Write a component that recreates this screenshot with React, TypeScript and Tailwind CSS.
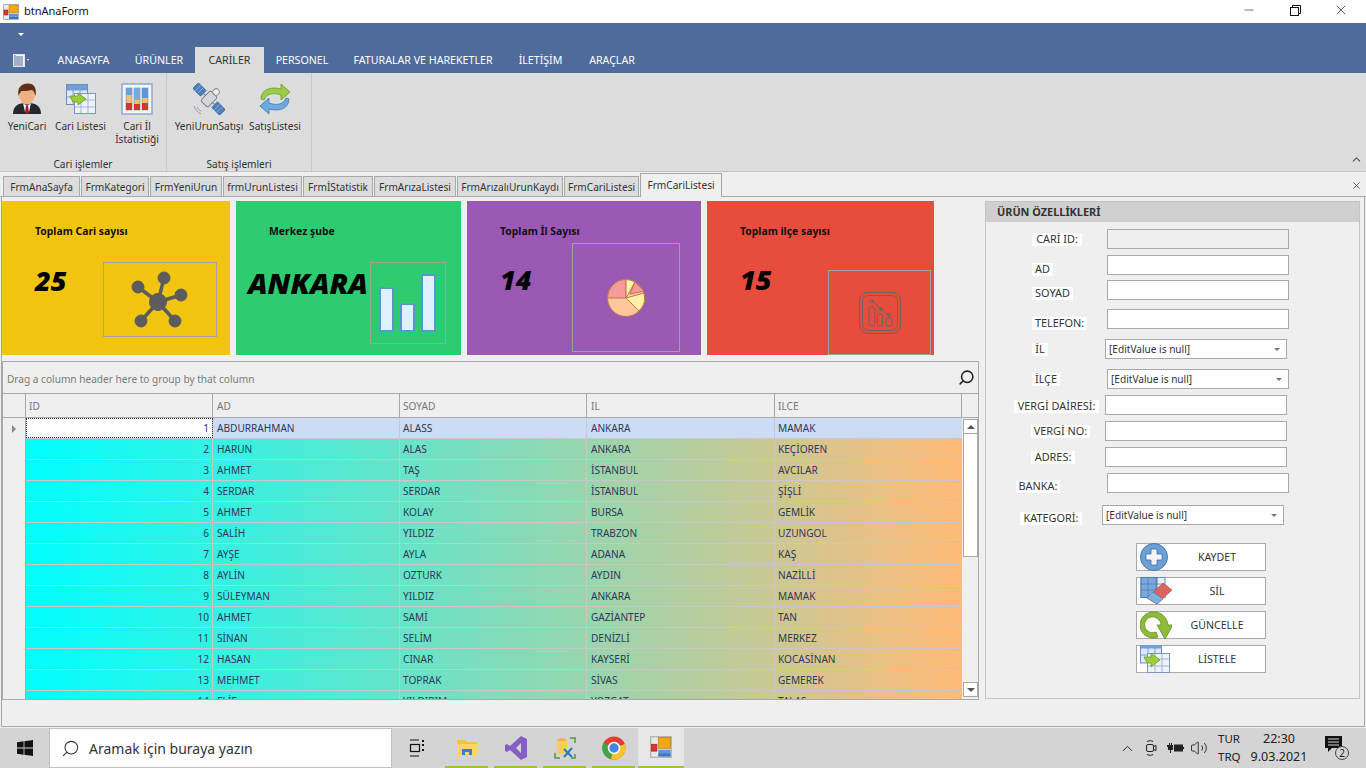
import type { ReactNode } from 'react';
import { Search, ChevronUp, Volume2, X, Minus } from 'lucide-react';

const rows = [
  ['1', 'ABDURRAHMAN', 'ALASS', 'ANKARA', 'MAMAK'],
  ['2', 'HARUN', 'ALAS', 'ANKARA', 'KEÇİOREN'],
  ['3', 'AHMET', 'TAŞ', 'İSTANBUL', 'AVCILAR'],
  ['4', 'SERDAR', 'SERDAR', 'İSTANBUL', 'ŞİŞLİ'],
  ['5', 'AHMET', 'KOLAY', 'BURSA', 'GEMLİK'],
  ['6', 'SALİH', 'YILDIZ', 'TRABZON', 'UZUNGOL'],
  ['7', 'AYŞE', 'AYLA', 'ADANA', 'KAŞ'],
  ['8', 'AYLİN', 'OZTURK', 'AYDIN', 'NAZİLLİ'],
  ['9', 'SÜLEYMAN', 'YILDIZ', 'ANKARA', 'MAMAK'],
  ['10', 'AHMET', 'SAMİ', 'GAZİANTEP', 'TAN'],
  ['11', 'SİNAN', 'SELİM', 'DENİZLİ', 'MERKEZ'],
  ['12', 'HASAN', 'CINAR', 'KAYSERİ', 'KOCASİNAN'],
  ['13', 'MEHMET', 'TOPRAK', 'SİVAS', 'GEMEREK'],
  ['14', 'ELİF', 'YILDIRIM', 'YOZGAT', 'TALAS'],
];

const ribbonTabs = [
  { label: 'ANASAYFA', cls: 'w-[79px]' },
  { label: 'ÜRÜNLER', cls: 'w-[72px]' },
  { label: 'CARİLER', cls: 'w-[69px] bg-[#dcdcdc] text-[#333]' },
  { label: 'PERSONEL', cls: 'w-[76px]' },
  { label: 'FATURALAR VE HAREKETLER', cls: 'w-[166px]' },
  { label: 'İLETİŞİM', cls: 'w-[69px]' },
  { label: 'ARAÇLAR', cls: 'w-[74px]' },
];

const docTabs = [
  { label: 'FrmAnaSayfa', cls: 'w-[77px]' },
  { label: 'FrmKategori', cls: 'w-[68px]' },
  { label: 'FrmYeniUrun', cls: 'w-[72px]' },
  { label: 'frmUrunListesi', cls: 'w-[79px]' },
  { label: 'FrmİStatistik', cls: 'w-[70px]' },
  { label: 'FrmArızaListesi', cls: 'w-[82px]' },
  { label: 'FrmArızalıUrunKaydı', cls: 'w-[106px]' },
  { label: 'FrmCariListesi', cls: 'w-[75px]' },
];

const formRows = [
  { label: 'CARİ ID:', row: 'mt-[7px]', col: 'w-[121px]', lab: 'ml-[46px] mt-[4px] w-[50px]', input: 'w-[182px] bg-[#efefef]' },
  { label: 'AD', row: 'mt-[6px]', col: 'w-[121px]', lab: 'ml-[46px] mt-[8px] w-[21px]', input: 'w-[182px] bg-white' },
  { label: 'SOYAD', row: 'mt-[5px]', col: 'w-[121px]', lab: 'ml-[46px] mt-[7px] w-[41px]', input: 'w-[182px] bg-white' },
  { label: 'TELEFON:', row: 'mt-[9px]', col: 'w-[121px]', lab: 'ml-[46px] mt-[8px] w-[55px]', input: 'w-[182px] bg-white' },
  { label: 'İL', row: 'mt-[10px]', col: 'w-[119px]', lab: 'ml-[46px] mt-[4px] w-[16px]', combo: true },
  { label: 'İLÇE', row: 'mt-[10px]', col: 'w-[121px]', lab: 'ml-[46px] mt-[4px] w-[28px]', combo: true },
  { label: 'VERGİ DAİRESİ:', row: 'mt-[6px]', col: 'w-[119px]', lab: 'ml-[28px] mt-[5px] w-[85px]', input: 'w-[182px] bg-white' },
  { label: 'VERGİ NO:', row: 'mt-[6px]', col: 'w-[119px]', lab: 'ml-[45px] mt-[4px] w-[59px]', input: 'w-[182px] bg-white' },
  { label: 'ADRES:', row: 'mt-[6px]', col: 'w-[119px]', lab: 'ml-[45px] mt-[4px] w-[44px]', input: 'w-[182px] bg-white' },
  { label: 'BANKA:', row: 'mt-[6px]', col: 'w-[121px]', lab: 'ml-[30px] mt-[7px] w-[44px]', input: 'w-[182px] bg-white' },
  { label: 'KATEGORİ:', row: 'mt-[12px]', col: 'w-[116px]', lab: 'ml-[34px] mt-[7px] w-[62px]', combo: true },
];

function PersonIcon() {
  return (
    <svg width="32" height="32" viewBox="0 0 32 32">
      <path d="M2 31c0-8 5-11 14-11s14 3 14 11z" fill="#26282e" />
      <path d="M12 20l4 3 4-3-2 9h-4z" fill="#f4f4f4" />
      <path d="M15 23h2l1 6-2 2-2-2z" fill="#a81c22" />
      <ellipse cx="16" cy="11.500" rx="8" ry="10" fill="#eeb184" />
      <path d="M7.500 13C6 4 11 0.500 17 0.500s9 4.500 7.500 12.500c-1-3-2-6-4-6-3 1-8 1-10 1-1 1-2.500 3-3 5z" fill="#5c2f16" />
    </svg>
  );
}

function GridArrowIcon() {
  return (
    <svg width="32" height="32" viewBox="0 0 32 32">
      <rect x="1.500" y="1.500" width="21" height="20" fill="#dfe8f5" stroke="#6f8fc2" />
      <rect x="2" y="2" width="20" height="5" fill="#6ca0d8" />
      <path d="M8 2v19M15 2v19M2 7h20M2 14h20" stroke="#7f9ccc" strokeWidth="1" />
      <rect x="9.500" y="10.500" width="21" height="20" fill="#eef2fa" stroke="#7e94c6" />
      <path d="M16 11v19M23 11v19M10 17h20M10 24h20" stroke="#a3b4d8" strokeWidth="1" />
      <path d="M5 13h8v-3l8 6-8 6v-3H8z" fill="#9ccb3c" stroke="#6c9a22" strokeWidth="0.800" />
    </svg>
  );
}

function BarsIcon() {
  return (
    <svg width="32" height="32" viewBox="0 0 32 32">
      <rect x="1" y="1" width="30" height="30" fill="#f3f6fb" stroke="#8ba3cc" strokeWidth="1.400" />
      <rect x="5" y="5" width="6" height="22" fill="#f0c070" stroke="#7d8ba8" strokeWidth="0.600" />
      <rect x="5" y="5" width="6" height="7" fill="#6ba2d6" />
      <rect x="5" y="20" width="6" height="7" fill="#c93d30" />
      <rect x="13" y="5" width="6" height="22" fill="#f0c070" stroke="#7d8ba8" strokeWidth="0.600" />
      <rect x="13" y="5" width="6" height="12" fill="#7aaadb" />
      <rect x="13" y="21" width="6" height="6" fill="#c93d30" />
      <rect x="21" y="5" width="6" height="22" fill="#f0c070" stroke="#7d8ba8" strokeWidth="0.600" />
      <rect x="21" y="5" width="6" height="10" fill="#5d98d2" />
      <rect x="21" y="20" width="6" height="7" fill="#c93d30" />
    </svg>
  );
}

function SatelliteIcon() {
  return (
    <svg width="32" height="32" viewBox="0 0 32 32">
      <g transform="rotate(45 16 16)">
        <rect x="-3" y="12" width="11" height="8" fill="#4d7fbe" stroke="#2f5e9c" strokeWidth="0.700" />
        <path d="M0.500 12v8M4 12v8" stroke="#9cc0e6" strokeWidth="0.700" />
        <rect x="24" y="12" width="11" height="8" fill="#4d7fbe" stroke="#2f5e9c" strokeWidth="0.700" />
        <path d="M27.500 12v8M31 12v8" stroke="#9cc0e6" strokeWidth="0.700" />
        <rect x="11" y="9" width="10" height="14" rx="2" fill="#d4d6da" stroke="#7a7f88" />
        <rect x="13" y="3" width="6" height="6" rx="2" fill="#eceef0" stroke="#8b8f96" />
        <path d="M8 16h3M21 16h3" stroke="#777" />
      </g>
      <path d="M1 23c1 3 3 6 7 8M4 24c1 2 2 3 4 4" fill="none" stroke="#8fa0b5" />
    </svg>
  );
}

function RefreshIcon() {
  return (
    <svg width="32" height="32" viewBox="0 0 32 32">
      <path d="M2 16C2 7 11 3 22 6V1l9 8-9 8v-5C14 9 7 11 5 17z" fill="#9bcc45" stroke="#6d9c26" strokeWidth="0.800" />
      <path d="M30 16c0 9-9 13-20 10v5l-9-8 9-8v5c8 3 15 1 17-5z" fill="#6fa8dc" stroke="#3f78b5" strokeWidth="0.800" />
    </svg>
  );
}

function PlusIcon() {
  return (
    <svg width="28" height="28" viewBox="0 0 28 28">
      <circle cx="14" cy="14" r="13.500" fill="#6da0d6" stroke="#4c78b0" />
      <path d="M11 6h6v5h5v6h-5v5h-6v-5H6v-6h5z" fill="#f3f7fc" stroke="#3f6ba8" strokeWidth="0.800" />
    </svg>
  );
}

function EraserIcon() {
  return (
    <svg width="32" height="28" viewBox="0 0 32 28">
      <rect x="1" y="0.500" width="24" height="20" fill="#e6edf7" stroke="#6c8cbd" />
      <rect x="1" y="0.500" width="16" height="20" fill="#7aa8db" stroke="#4f7ab0" />
      <path d="M1 7h24M1 13h24M8 1v19M16 1v19" stroke="#4f7ab0" strokeWidth="0.700" />
      <path d="M7 21L23 6l9 7-15 14z" fill="#d9655c" stroke="#a94a43" strokeWidth="0.600" />
      <path d="M7 21l6-6 10 7-6 5z" fill="#7eb0e0" stroke="#4f7ab0" strokeWidth="0.600" />
    </svg>
  );
}

function UpdateIcon() {
  return (
    <svg width="32" height="28" viewBox="0 0 32 28">
      <path d="M14 1a13 13 0 1 0 4 25l-2-5a8 8 0 1 1 3-12c1 1 2 3 2 5h-4l8 14 8-14h-5C27 6 21 1 14 1z" fill="#8fbb3a" stroke="#648a22" strokeWidth="0.800" />
    </svg>
  );
}

function ListIcon() {
  return (
    <svg width="30" height="28" viewBox="0 0 30 28">
      <rect x="0.500" y="-4" width="21" height="22" fill="#dfe8f5" stroke="#6f8fc2" />
      <rect x="1" y="-4" width="20" height="7" fill="#6ca0d8" />
      <path d="M8 -4v22M15 -4v22M1 3h20M1 10h20" stroke="#7f9ccc" />
      <rect x="7.500" y="8.500" width="22" height="19" fill="#eef2fa" stroke="#7e94c6" />
      <path d="M15 9v18M22 9v18M8 14h21M8 21h21" stroke="#a3b4d8" />
      <path d="M4 12h7V8l9 7-9 7v-4H7z" fill="#9ccb3c" stroke="#6c9a22" strokeWidth="0.700" />
    </svg>
  );
}

function AppLogo({ size = 16 }: { size?: number }) {
  return (
    <svg width={size} height={size} viewBox="0 0 16 16">
      <rect x="0.500" y="0.500" width="15" height="15" fill="#e8e8e8" stroke="#b5b5b5" />
      <rect x="6" y="1" width="9" height="8" fill="#f0a818" stroke="#b97f10" strokeWidth="0.500" />
      <rect x="1" y="6" width="4" height="5" fill="#d9362b" stroke="#9c231b" strokeWidth="0.500" />
      <rect x="6" y="10" width="9" height="2.500" fill="#5b95dd" />
      <rect x="6" y="12.500" width="9" height="2.500" fill="#3d74c4" />
    </svg>
  );
}

function ComboBox() {
  return (
    <div className="h-[20px] w-[182px] shrink-0 border border-[#a9a9a9] bg-white flex items-center pl-[3px] pr-[6px]">
      <span className="flex-1 pt-[1px] text-[#333]">[EditValue is null]</span>
      <span className="w-0 h-0 border-x-[3px] border-x-transparent border-t-[3px] border-t-[#777]" />
    </div>
  );
}

function StatCard({ cls, title, value, valueCls, boxCls, children }: {
  cls: string; title: string; value: string; valueCls: string; boxCls: string; children: ReactNode;
}) {
  return (
    <div className={`relative h-[154px] shrink-0 ${cls}`}>
      <div className="font-bold text-[10.4px] text-[#111] pl-[33px] pt-[23px]">{title}</div>
      <div className={`italic font-extrabold text-black leading-none font-['Open_Sans',sans-serif] ${valueCls}`}>{value}</div>
      <div className={`absolute border border-[#a0a0a0] flex items-center justify-center ${boxCls}`}>{children}</div>
    </div>
  );
}

function TaskIcon({ children }: { children: ReactNode }) {
  return (
    <div className="w-[49px] h-[40px] flex justify-center items-center relative">
      {children}
      <div className="absolute bottom-0 left-[3px] right-[3px] h-[2px] bg-[#9dc23b]" />
    </div>
  );
}

function RibbonBtn({ cls, label, children }: { cls: string; label: string; children: ReactNode }) {
  return (
    <div className={`flex flex-col items-center shrink-0 ${cls}`}>
      <div className="h-[32px] flex items-center">{children}</div>
      <div className="mt-[5px] text-center whitespace-pre-line leading-[13px] text-[#333]">{label}</div>
    </div>
  );
}

function ActionButton({ label, icon }: { label: string; icon: ReactNode }) {
  return (
    <div className="relative h-[28px] border border-[#a9a9a9] bg-white flex items-center justify-center pl-[32px] pt-[1px] text-[10.6px] text-[#333]">
      <div className="absolute left-[3px] -top-px h-[28px] flex items-center overflow-hidden">{icon}</div>
      <span>{label}</span>
    </div>
  );
}

export default function App() {
  return (
    <div className="w-[1366px] h-[768px] overflow-hidden flex flex-col bg-[#efefef] text-[10.1px] text-[#2a2a2a] font-['Noto_Sans',sans-serif]">
      {/* title bar */}
      <div className="h-[23px] bg-white flex items-center text-[11px] text-[#111] shrink-0">
        <div className="ml-[3px] mr-[5px] flex"><AppLogo /></div>
        <span>btnAnaForm</span>
        <div className="ml-auto mr-[2px] mb-[3px] flex items-center">
          <div className="w-[46px] flex justify-center"><Minus size={14} strokeWidth={1} /></div>
          <div className="w-[46px] flex justify-center">
            <svg width="11" height="11" viewBox="0 0 11 11" fill="none" stroke="#111"><rect x="0.500" y="2.500" width="8" height="8" /><path d="M2.500 2.500v-2h8v8h-2" /></svg>
          </div>
          <div className="w-[46px] flex justify-center"><X size={16} strokeWidth={1} /></div>
        </div>
      </div>

      {/* ribbon header */}
      <div className="h-[50px] bg-[#4f6b9b] shrink-0 flex flex-col">
        <div className="h-[24px] pl-[18px] pt-[10px]">
          <div className="w-0 h-0 border-x-[3px] border-x-transparent border-t-[3px] border-t-white" />
        </div>
        <div className="h-[26px] flex items-stretch text-white text-[10.65px]">
          <div className="w-[44px] flex items-center pl-[13px] gap-[2px]">
            <svg width="12" height="13" viewBox="0 0 12 13"><rect x="0.500" y="0.500" width="11" height="12" fill="#f4f4f4" stroke="#dfe5ee" /><path d="M3 3h7M3 5h7M3 7h7M3 9h7M3 11h7" stroke="#4f6b9b" /><path d="M2 1v11" stroke="#4f6b9b" /></svg>
            <span className="w-0 h-0 border-x-[1.5px] border-x-transparent border-t-[2px] border-t-white" />
          </div>
          {ribbonTabs.map(t => (
            <div key={t.label} className={`flex items-center justify-center pt-[2px] ${t.cls}`}>{t.label}</div>
          ))}
        </div>
      </div>

      {/* ribbon body */}
      <div className="h-[99px] bg-[#dcdcdc] shrink-0 flex border-b border-[#c4c4c4] relative">
        <div className="w-[167px] border-r border-[#c8c8c8] flex flex-col">
          <div className="flex-1 flex pt-[10px]">
            <RibbonBtn cls="w-[54px]" label="YeniCari"><PersonIcon /></RibbonBtn>
            <RibbonBtn cls="w-[53px]" label="Cari Listesi"><GridArrowIcon /></RibbonBtn>
            <RibbonBtn cls="w-[60px]" label={'Cari İl\nİstatistiği'}><BarsIcon /></RibbonBtn>
          </div>
          <div className="h-[21px] pt-[7px] text-center text-[#333]">Cari işlemler</div>
        </div>
        <div className="w-[145px] border-r border-[#c8c8c8] flex flex-col">
          <div className="flex-1 flex pt-[10px] pl-[6px]">
            <RibbonBtn cls="w-[72px]" label="YeniUrunSatışı"><SatelliteIcon /></RibbonBtn>
            <RibbonBtn cls="w-[60px]" label="SatışListesi"><RefreshIcon /></RibbonBtn>
          </div>
          <div className="h-[21px] pt-[7px] text-center text-[#333]">Satış işlemleri</div>
        </div>
        <ChevronUp size={13} className="absolute right-[3px] bottom-[5px] text-[#555]" strokeWidth={2} />
      </div>

      {/* document tabs */}
      <div className="h-[25px] shrink-0 flex items-end pl-[3px] relative border-b border-[#a8a8a8] bg-[#efefef]">
        {docTabs.map(t => (
          <div key={t.label} className={`h-[21px] pt-[2px] mr-[1px] -mb-px border border-[#a8a8a8] bg-[#dcdcdc] flex items-center justify-center text-[#333] ${t.cls}`}>{t.label}</div>
        ))}
        <div className="h-[24px] w-[82px] pt-[1px] -mb-px border border-b-0 border-[#a8a8a8] bg-[#efefef] flex items-center justify-center text-[#333]">FrmCariListesi</div>
        <X size={11} className="absolute right-[4px] top-[8px] text-[#555]" />
      </div>

      {/* content */}
      <div className="flex-1 min-h-0 mx-[1px] border-x border-b border-[#a8a8a8] flex pt-[3px]">
        <div className="w-[979px] shrink-0 flex flex-col pt-[1px]">
          {/* stat cards */}
          <div className="flex gap-[6px] shrink-0">
            <StatCard cls="w-[228px] bg-[#f1c40f]" title="Toplam Cari sayısı" value="25" valueCls="pl-[33px] pt-[27px] text-[27px]" boxCls="left-[101px] top-[61px] w-[114px] h-[75px]">
              <svg width="60" height="60" viewBox="0 0 60 60" fill="#5c5c5c" stroke="#5c5c5c">
                <path d="M28 32L8 17M28 32L34 8M28 32L51 25M28 32L11 51M28 32L45 51" strokeWidth="3.500" />
                <circle cx="28" cy="32" r="8.500" />
                <circle cx="8" cy="17" r="6" />
                <circle cx="34" cy="8" r="6" />
                <circle cx="51" cy="25" r="6" />
                <circle cx="11" cy="51" r="6" />
                <circle cx="45" cy="51" r="6" />
              </svg>
            </StatCard>
            <StatCard cls="w-[225px] bg-[#2ecc71]" title="Merkez şube" value="ANKARA" valueCls="pl-[12px] pt-[28px] text-[29px]" boxCls="left-[134px] top-[61px] w-[76px] h-[82px]">
              <svg width="58" height="58" viewBox="0 0 58 58" fill="#e1f0fd" stroke="#5b95d0" strokeWidth="2">
                <rect x="1" y="14" width="13" height="43" />
                <rect x="22" y="30" width="13" height="27" />
                <rect x="43" y="1" width="13" height="56" />
              </svg>
            </StatCard>
            <StatCard cls="w-[234px] bg-[#9b59b6]" title="Toplam İl Sayısı" value="14" valueCls="pl-[33px] pt-[26px] text-[27px]" boxCls="left-[105px] top-[42px] w-[108px] h-[109px]">
              <svg width="38" height="38" viewBox="0 0 38 38" stroke="#b8794a" strokeWidth="1">
                <circle cx="19" cy="19" r="18.500" fill="#ffc79a" />
                <path d="M19 19V.5A18.500 18.500 0 0 0 .5 19z" fill="#f79a9a" />
                <path d="M19 19V.5a18 18 0 0 1 9 2.500z" fill="#fff0a8" />
                <path d="M19 19l18-5a18.500 18.500 0 0 1-5 18z" fill="#fff0a8" />
                <path d="M23 15l5-12 9 9z" fill="#f79a9a" />
              </svg>
            </StatCard>
            <StatCard cls="w-[227px] bg-[#e74c3c]" title="Toplam ilçe sayısı" value="15" valueCls="pl-[33px] pt-[26px] text-[27px]" boxCls="left-[121px] top-[69px] w-[103px] h-[85px]">
              <svg width="42" height="42" viewBox="0 0 42 42" fill="none" stroke="#666" strokeWidth="1">
                <rect x="0.500" y="0.500" width="41" height="41" rx="8" />
                <rect x="3.500" y="3.500" width="35" height="35" rx="6" />
                <rect x="10" y="15" width="6" height="19" rx="2" />
                <rect x="18.500" y="22" width="5" height="12" rx="1.500" />
                <rect x="27" y="26" width="6" height="8" rx="1.500" />
                <path d="M13 9l9 8 8 6" />
                <circle cx="13" cy="9" r="1.500" />
                <circle cx="22" cy="17" r="1.500" />
                <circle cx="30" cy="23" r="1.500" />
              </svg>
            </StatCard>
          </div>

          {/* grid */}
          <div className="mt-[6px] h-[339px] w-[977px] border border-[#a8a8a8] flex flex-col overflow-hidden text-[#2a3a5a]">
            <div className="h-[32px] shrink-0 flex items-center justify-between pl-[4px] pr-[3px] text-[#7a7a7a] border-b border-[#a8a8a8]">
              <span className="pt-[5px]">Drag a column header here to group by that column</span>
              <Search size={17} strokeWidth={2.2} className="text-[#222] -scale-x-100" />
            </div>
            <div className="h-[24px] shrink-0 flex border-b border-[#a8a8a8] text-[#777]">
              <div className="w-[23px] border-r border-[#a8a8a8]" />
              <div className="w-[187px] border-r border-[#a8a8a8] flex items-center pl-[3px] pt-[2px]">ID</div>
              <div className="w-[187px] border-r border-[#a8a8a8] flex items-center pl-[4px] pt-[2px]">AD</div>
              <div className="w-[187px] border-r border-[#a8a8a8] flex items-center pl-[3px] pt-[2px]">SOYAD</div>
              <div className="w-[188px] border-r border-[#a8a8a8] flex items-center pl-[4px] pt-[2px]">IL</div>
              <div className="w-[187px] border-r border-[#a8a8a8] flex items-center pl-[3px] pt-[2px]">ILCE</div>
            </div>
            <div className="flex flex-1 min-h-0">
              <div className="w-[23px] shrink-0 border-r border-[#a8a8a8] pt-[7px] pl-[9px]">
                <div className="w-0 h-0 border-y-[4px] border-y-transparent border-l-[4px] border-l-[#888]" />
              </div>
              <div className="w-[936px] shrink-0">
                {rows.map((r, i) => (
                  <div key={r[0]} className={`h-[21px] flex border-b border-[#c8c8c8] ${i === 0 ? 'bg-[#cddcf5]' : 'bg-linear-to-r/srgb from-[#00ffff] to-[#ffba78]'}`}>
                    <div className={`w-[187px] shrink-0 border-r border-[#c8c8c8] flex items-center justify-end pr-[3px] pt-[1px] ${i === 0 ? 'bg-white outline-1 -outline-offset-1 outline-dotted outline-[#333]' : ''}`}>{r[0]}</div>
                    <div className="w-[187px] shrink-0 border-r border-[#c8c8c8] flex items-center pl-[4px] pt-[1px]">{r[1]}</div>
                    <div className="w-[187px] shrink-0 border-r border-[#c8c8c8] flex items-center pl-[3px] pt-[1px]">{r[2]}</div>
                    <div className="w-[188px] shrink-0 border-r border-[#c8c8c8] flex items-center pl-[4px] pt-[1px]">{r[3]}</div>
                    <div className="w-[187px] shrink-0 flex items-center pl-[3px] pt-[1px]">{r[4]}</div>
                  </div>
                ))}
              </div>
              {/* scrollbar */}
              <div className="w-[15px] ml-[1px] shrink-0 flex flex-col pt-[1px] pb-[2px]">
                <div className="h-[15px] border border-[#a8a8a8] bg-white flex items-center justify-center">
                  <span className="w-0 h-0 border-x-[4px] border-x-transparent border-b-[4px] border-b-[#555]" />
                </div>
                <div className="h-[123px] border border-t-0 border-[#a8a8a8] bg-white" />
                <div className="flex-1" />
                <div className="h-[15px] border border-[#a8a8a8] bg-white flex items-center justify-center">
                  <span className="w-0 h-0 border-x-[4px] border-x-transparent border-t-[4px] border-t-[#555]" />
                </div>
              </div>
            </div>
          </div>
        </div>

        {/* right panel */}
        <div className="ml-[4px] mt-[1px] h-[498px] w-[375px] border border-[#c4c4c4] flex flex-col shrink-0">
          <div className="h-[20px] shrink-0 bg-[#cfcfcf] pl-[11px] pt-[1px] flex items-center font-bold text-[10.9px] text-[#333]">ÜRÜN ÖZELLİKLERİ</div>
          {formRows.map(f => (
            <div key={f.label} className={`flex h-[20px] shrink-0 ${f.row}`}>
              <div className={`shrink-0 ${f.col}`}>
                <div className={`h-[13px] flex items-center justify-center bg-white text-[10.9px] text-[#333] whitespace-nowrap ${f.lab}`}>{f.label}</div>
              </div>
              {f.combo ? <ComboBox /> : <div className={`h-[20px] shrink-0 border border-[#a9a9a9] ${f.input}`} />}
            </div>
          ))}
          <div className="mt-[18px] ml-[150px] w-[130px] flex flex-col gap-[6px]">
            <ActionButton label="KAYDET" icon={<PlusIcon />} />
            <ActionButton label="SİL" icon={<EraserIcon />} />
            <ActionButton label="GÜNCELLE" icon={<UpdateIcon />} />
            <ActionButton label="LİSTELE" icon={<ListIcon />} />
          </div>
        </div>
      </div>

      {/* taskbar */}
      <div className="h-[40px] mt-[1px] shrink-0 bg-[#d4d4d4] flex items-center text-[#222]">
        <div className="w-[49px] flex justify-center">
          <svg width="16" height="16" viewBox="0 0 16 16" fill="#111"><path d="M0 2.200L6.600 1.300V7.600H0zM7.400 1.200L16 0V7.600H7.400zM0 8.400H6.600V14.700L0 13.800zM7.400 8.400H16V16L7.400 14.800z" /></svg>
        </div>
        <div className="w-[343px] h-[40px] bg-white border border-[#c0c0c0] flex items-center pl-[11px] gap-[9px] text-[14px] text-[#333]">
          <Search size={19} strokeWidth={1.3} className="-scale-x-100" />
          <span>Aramak için buraya yazın</span>
        </div>
        <div className="w-[50px] flex justify-center">
          <svg width="16" height="18" viewBox="0 0 16 18" fill="none" stroke="#111" strokeWidth="1.200"><path d="M1 1h9M1 17h9" /><rect x="1.500" y="5.500" width="9" height="7" /><path d="M13 2h2M13 6h2M13 11h2" strokeWidth="2" /></svg>
        </div>
        <TaskIcon><svg width="24" height="24" viewBox="0 0 24 24"><path d="M2 4h8l2 2h10v14H2z" fill="#f5c242" /><rect x="2" y="8" width="20" height="12" fill="#fbd568" /><path d="M7 19v-6h10v6h-3v-3h-4v3z" fill="#2f86d0" /></svg></TaskIcon>
        <TaskIcon><svg width="24" height="26" viewBox="0 0 24 26"><path d="M17 1l6 3v18l-6 3L6 15l-3 2-2-1V10l2-1 3 2zM17 8l-5 5 5 5z" fill="#865fc5" /></svg></TaskIcon>
        <TaskIcon><svg width="24" height="24" viewBox="0 0 24 24"><ellipse cx="9" cy="5" rx="5" ry="3" fill="#eeb25f" /><rect x="4" y="5" width="10" height="13" fill="#f6d24c" /><path d="M17 2h5v5M2 17v5h5M18 22h4v-4" fill="none" stroke="#4a9a4a" strokeWidth="1.500" /><path d="M11 13l8 8M19 12l-8 9" stroke="#2a78c8" strokeWidth="2" /></svg></TaskIcon>
        <TaskIcon><svg width="24" height="24" viewBox="0 0 24 24"><circle cx="12" cy="12" r="11.500" fill="#e53c30" /><path d="M12 12L1.500 6.500A11.500 11.500 0 0 0 9 23.100z" fill="#3fa64a" /><path d="M12 12l-3 11.100A11.500 11.500 0 0 0 22.900 8z" fill="#f9c52c" /><circle cx="12" cy="12" r="5.500" fill="#3f86e8" stroke="#fff" strokeWidth="1.500" /></svg></TaskIcon>
        <div className="w-[46px] h-[40px] bg-[#e6e6e6] border-b-2 border-[#9dc23b] flex justify-center items-center"><AppLogo size={22} /></div>

        <div className="ml-auto flex items-center">
          <div className="w-[24px] flex justify-center"><ChevronUp size={17} strokeWidth={1.3} /></div>
          <div className="w-[24px] flex justify-center">
            <svg width="12" height="18" viewBox="0 0 12 18" fill="none" stroke="#222"><rect x="1.500" y="5.500" width="7" height="7" rx="1.500" /><path d="M8.500 7.500L11 6.500v5l-2.500-1M2 2.500c2-1 4-1 6 0M2 15.500c2 1 4 1 6 0" /></svg>
          </div>
          <div className="w-[24px] flex justify-center">
            <svg width="17" height="12" viewBox="0 0 17 12" fill="#222"><path d="M0 3h2V1h1v2h1V1h1v2h1v5H4v3H3V8H1V5H0z" /><rect x="7" y="2.500" width="9" height="7" /><rect x="16" y="5" width="1" height="2" /></svg>
          </div>
          <div className="w-[24px] flex justify-center"><Volume2 size={18} strokeWidth={1.2} /></div>
          <div className="ml-[7px] w-[31px] text-[11.5px] leading-[18px] text-[#222]"><div>TUR</div><div>TRQ</div></div>
          <div className="w-[60px] text-[12.5px] leading-[18px] text-center text-[#222]"><div>22:30</div><div>9.03.2021</div></div>
          <div className="ml-[16px] mr-[17px] relative w-[24px] h-[24px]">
            <svg width="17" height="17" viewBox="0 0 17 17" fill="#111"><path d="M0 0h17v12H7l-4 4v-4H0z" /><path d="M3 3h11M3 6h11M3 9h11" stroke="#d4d4d4" /></svg>
            <div className="absolute right-0 bottom-0 w-[14px] h-[14px] rounded-full bg-[#d4d4d4] border border-[#444] text-[10px] leading-[12px] text-center">2</div>
          </div>
        </div>
      </div>
    </div>
  );
}
